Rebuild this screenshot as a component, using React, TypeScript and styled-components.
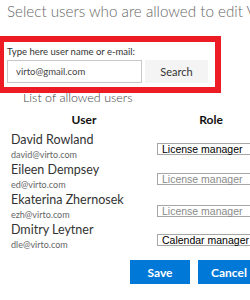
import React from 'react';
import styled, { createGlobalStyle } from 'styled-components';

const GlobalStyle = createGlobalStyle`
  body {
    margin: 0;
    background: #fff;
    overflow: hidden;
    font-family: Lato, 'Open Sans', sans-serif;
  }
`;

const Page = styled.div`
  width: 280px;
`;

const Title = styled.h1`
  margin: 0 0 0 7px;
  font-size: 15.2px;
  font-weight: 300;
  line-height: 22px;
  color: #666;
  white-space: nowrap;
`;

const SearchBox = styled.div`
  margin-top: 14px;
  width: 206px;
  border: 6px solid #ed1c24;
  border-left-width: 4px;
  padding: 3px 2px 4px 3px;
`;

const SearchLabel = styled.div`
  font-size: 9.5px;
  line-height: 14px;
  color: #333;
  margin-bottom: 1px;
`;

const SearchRow = styled.div`
  display: flex;
  gap: 3px;
`;

const TextInput = styled.input`
  box-sizing: border-box;
  width: 135px;
  height: 23px;
  border: 1px solid #c8c8c8;
  padding: 0 0 0 8px;
  font-family: inherit;
  font-size: 9.5px;
  color: #444;
  outline: none;
`;

const SearchButton = styled.button`
  width: 63px;
  height: 23px;
  border: none;
  background: #f4f4f4;
  font-family: inherit;
  font-size: 11px;
  color: #333;
  padding: 0;
`;

const ListTitle = styled.h2`
  margin: -2px 0 0 23px;
  font-size: 12.5px;
  font-weight: 300;
  line-height: 14px;
  color: #444;
`;

const Table = styled.div`
  display: grid;
  grid-template-columns: 146px 108px;
  padding-left: 11px;
  margin-top: 7px;
`;

const HeaderCell = styled.div`
  text-align: center;
  font-size: 12px;
  font-weight: 700;
  line-height: 16px;
  color: #111;
  margin-bottom: 3px;
`;

const UserCell = styled.div`
  height: 30px;
`;

const UserName = styled.div`
  font-size: 12.5px;
  line-height: 17px;
  color: #333;
  white-space: nowrap;
`;

const UserEmail = styled.div`
  font-size: 9px;
  line-height: 13px;
  color: #666;
`;

const RoleCell = styled.div<{ $offset: number }>`
  height: 30px;
  padding-top: ${(p) => p.$offset}px;
  box-sizing: border-box;
`;

const RoleSelect = styled.div<{ $disabled?: boolean }>`
  width: 105px;
  height: 10px;
  border: 1px solid #a6a6a6;
  padding-left: 4px;
  font-family: 'Liberation Sans', Arial, sans-serif;
  font-size: 10.5px;
  line-height: 10px;
  color: ${(p) => (p.$disabled ? '#8a8a8a' : '#000')};
  white-space: nowrap;
`;

const Actions = styled.div`
  display: flex;
  gap: 8px;
  padding-left: 130px;
  margin-top: 9px;
`;

const PrimaryButton = styled.button<{ $width: number }>`
  width: ${(p) => p.$width}px;
  height: 24px;
  border: none;
  padding: 0;
  background: #0078d7;
  color: #fff;
  font-family: inherit;
  font-size: 12px;
  font-weight: 700;
  flex-shrink: 0;
`;

const users = [
  { name: 'David Rowland', email: 'david@virto.com', role: 'License manager', disabled: false, offset: 12 },
  { name: 'Eileen Dempsey', email: 'ed@virto.com', role: 'License manager', disabled: true, offset: 12 },
  { name: 'Ekaterina Zhernosek', email: 'ezh@virto.com', role: 'License manager', disabled: true, offset: 14 },
  { name: 'Dmitry Leytner', email: 'dle@virto.com', role: 'Calendar manager', disabled: false, offset: 13 },
];

export default function App() {
  return (
    <Page>
      <GlobalStyle />
      <Title>Select users who are allowed to edit Virto</Title>
      <SearchBox>
        <SearchLabel>Type here user name or e-mail:</SearchLabel>
        <SearchRow>
          <TextInput defaultValue="virto@gmail.com" />
          <SearchButton>Search</SearchButton>
        </SearchRow>
      </SearchBox>
      <ListTitle>List of allowed users</ListTitle>
      <Table>
        <HeaderCell>User</HeaderCell>
        <HeaderCell>Role</HeaderCell>
        {users.map((u) => (
          <React.Fragment key={u.email}>
            <UserCell>
              <UserName>{u.name}</UserName>
              <UserEmail>{u.email}</UserEmail>
            </UserCell>
            <RoleCell $offset={u.offset}>
              <RoleSelect $disabled={u.disabled}>{u.role}</RoleSelect>
            </RoleCell>
          </React.Fragment>
        ))}
      </Table>
      <Actions>
        <PrimaryButton $width={60}>Save</PrimaryButton>
        <PrimaryButton $width={62}>Cancel</PrimaryButton>
      </Actions>
    </Page>
  );
}
